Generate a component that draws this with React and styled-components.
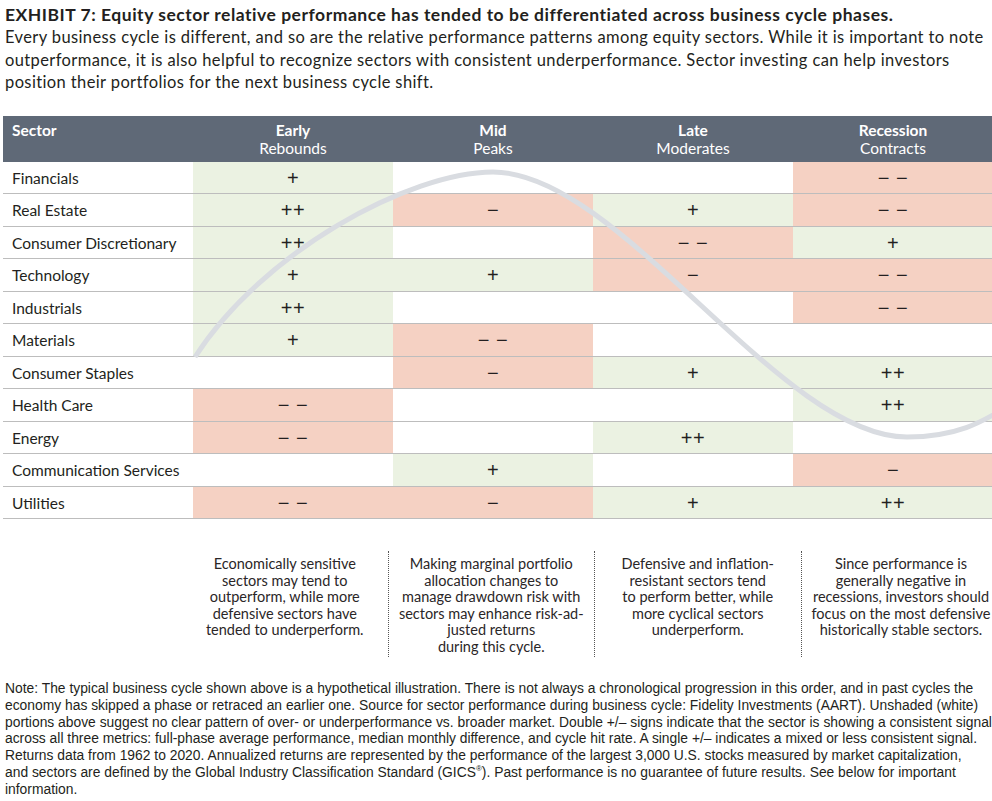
import React from 'react';
import styled, { createGlobalStyle } from 'styled-components';

const GlobalStyle = createGlobalStyle`
  html, body { margin: 0; padding: 0; background: #fff; overflow: hidden; }
  body { font-family: Lato, "Noto Sans", sans-serif; color: #231f20; }
`;

const Page = styled.div`
  width: 992px;
  height: 801px;
  overflow: hidden;
  padding-top: 4px;
  box-sizing: border-box;
`;

const Intro = styled.div`
  padding: 0 5px;
  white-space: nowrap;
`;

const Title = styled.h1`
  margin: 0;
  font-size: 17.5px;
  font-weight: 700;
  letter-spacing: 0.52px;
  line-height: 22px;
`;

const Lead = styled.p`
  margin: 0;
  font-size: 16.5px;
  letter-spacing: 0.38px;
  line-height: 22.5px;
`;

const TableWrap = styled.div`
  position: relative;
  margin: 22px 0 0 3px;
  width: 990px;
`;

const HeaderRow = styled.div`
  display: grid;
  grid-template-columns: 190px repeat(4, 200px);
  height: 46px;
  background: #5f6977;
  color: #fff;
`;

const HeadCell = styled.div`
  padding: 5px 0 0 ${p => (p.$left ? '9px' : '0')};
  text-align: ${p => (p.$left ? 'left' : 'center')};
  font-size: 15.5px;
  line-height: 18px;
`;

const HeadStrong = styled.div`
  font-weight: 700;
`;

const BodyRow = styled.div`
  display: grid;
  grid-template-columns: 190px repeat(4, 200px);
  height: 32.5px;
  box-sizing: border-box;
  border-bottom: 1px solid #bdbdbd;
`;

const SectorCell = styled.div`
  display: flex;
  align-items: center;
  padding: 1px 0 0 9px;
  font-size: 15.5px;
`;

const toneColor = { g: '#ebf2e2', r: '#f5d1c3' };

const Cell = styled.div`
  display: flex;
  align-items: center;
  justify-content: center;
  padding-top: 2px;
  background: ${p => (p.$tone ? toneColor[p.$tone] : 'transparent')};
  font-family: "Liberation Sans", Arial, sans-serif;
  font-size: 20px;
  letter-spacing: 0.5px;
`;

const Wave = styled.svg`
  position: absolute;
  left: 0;
  top: 0;
  width: 990px;
  height: 410px;
  overflow: visible;
  pointer-events: none;
`;

const DescRow = styled.div`
  display: flex;
  margin-top: 32px;
  padding-left: 181px;
`;

const DescBlock = styled.div`
  flex: 0 0 ${p => (p.$last ? '200px' : '206.5px')};
  height: 106px;
  box-sizing: border-box;
  border-left: ${p => (p.$first ? '1px solid transparent' : '1px dotted #555')};
  padding-top: 5px;
  text-align: center;
  font-size: 14.5px;
  line-height: 16.6px;
  white-space: nowrap;
  color: #2a2627;
`;

const Footnote = styled.p`
  margin: 23px 0 0;
  padding-left: 5px;
  font-family: "Liberation Sans", Arial, sans-serif;
  font-size: 13.85px;
  line-height: 16.8px;
  white-space: nowrap;
  color: #231f20;
`;

const Sup = styled.sup`
  font-size: 8px;
  line-height: 0;
`;

const sym = { p: '+', pp: '++', m: '−', mm: '− −' };
const tone = { p: 'g', pp: 'g', m: 'r', mm: 'r' };

const rows = [
  ['Financials', 'p', null, null, 'mm'],
  ['Real Estate', 'pp', 'm', 'p', 'mm'],
  ['Consumer Discretionary', 'pp', null, 'mm', 'p'],
  ['Technology', 'p', 'p', 'm', 'mm'],
  ['Industrials', 'pp', null, null, 'mm'],
  ['Materials', 'p', 'mm', null, null],
  ['Consumer Staples', null, 'm', 'p', 'pp'],
  ['Health Care', 'mm', null, null, 'pp'],
  ['Energy', 'mm', null, 'pp', null],
  ['Communication Services', null, 'p', null, 'm'],
  ['Utilities', 'mm', 'm', 'p', 'pp'],
];

const phases = [
  ['Early', 'Rebounds'],
  ['Mid', 'Peaks'],
  ['Late', 'Moderates'],
  ['Recession', 'Contracts'],
];

const descs = [
  ['Economically sensitive', 'sectors may tend to', 'outperform, while more', 'defensive sectors have', 'tended to underperform.'],
  ['Making marginal portfolio', 'allocation changes to', 'manage drawdown risk with', 'sectors may enhance risk-ad-', 'justed returns', 'during this cycle.'],
  ['Defensive and inflation-', 'resistant sectors tend', 'to perform better, while', 'more cyclical sectors', 'underperform.'],
  ['Since performance is', 'generally negative in', 'recessions, investors should', 'focus on the most defensive', 'historically stable sectors.'],
];

const Lines = ({ lines }) =>
  lines.map((l, i) => (
    <React.Fragment key={i}>
      {l}
      {i < lines.length - 1 && <br />}
    </React.Fragment>
  ));

export default function App() {
  return (
    <Page>
      <GlobalStyle />
      <Intro>
        <Title>EXHIBIT 7: Equity sector relative performance has tended to be differentiated across business cycle phases.</Title>
        <Lead>
          <Lines
            lines={[
              'Every business cycle is different, and so are the relative performance patterns among equity sectors. While it is important to note',
              'outperformance, it is also helpful to recognize sectors with consistent underperformance. Sector investing can help investors',
              'position their portfolios for the next business cycle shift.',
            ]}
          />
        </Lead>
      </Intro>

      <TableWrap>
        <HeaderRow>
          <HeadCell $left>
            <HeadStrong>Sector</HeadStrong>
          </HeadCell>
          {phases.map(([a, b]) => (
            <HeadCell key={a}>
              <HeadStrong>{a}</HeadStrong>
              <div>{b}</div>
            </HeadCell>
          ))}
        </HeaderRow>
        {rows.map(([name, ...vals]) => (
          <BodyRow key={name}>
            <SectorCell>{name}</SectorCell>
            {vals.map((v, i) => (
              <Cell key={i} $tone={v ? tone[v] : null}>
                {v ? sym[v] : ''}
              </Cell>
            ))}
          </BodyRow>
        ))}
        <Wave viewBox="0 0 990 410">
          <g transform="translate(-3 -116)">
            <path
              d="M195,357 C262,252 410,172 493,172 C620,172 780,437 907,437 C960,437 985,420 1010,405"
              fill="none"
              stroke="#d9dce1"
              strokeWidth="5"
            />
          </g>
        </Wave>
      </TableWrap>

      <DescRow>
        {descs.map((d, i) => (
          <DescBlock key={i} $first={i === 0} $last={i === descs.length - 1}>
            <Lines lines={d} />
          </DescBlock>
        ))}
      </DescRow>

      <Footnote>
        Note: The typical business cycle shown above is a hypothetical illustration. There is not always a chronological progression in this order, and in past cycles the
        <br />
        economy has skipped a phase or retraced an earlier one. Source for sector performance during business cycle: Fidelity Investments (AART). Unshaded (white)
        <br />
        portions above suggest no clear pattern of over- or underperformance vs. broader market. Double +/– signs indicate that the sector is showing a consistent signal
        <br />
        across all three metrics: full-phase average performance, median monthly difference, and cycle hit rate. A single +/– indicates a mixed or less consistent signal.
        <br />
        Returns data from 1962 to 2020. Annualized returns are represented by the performance of the largest 3,000 U.S. stocks measured by market capitalization,
        <br />
        and sectors are defined by the Global Industry Classification Standard (GICS<Sup>®</Sup>). Past performance is no guarantee of future results. See below for important
        <br />
        information.
      </Footnote>
    </Page>
  );
}
